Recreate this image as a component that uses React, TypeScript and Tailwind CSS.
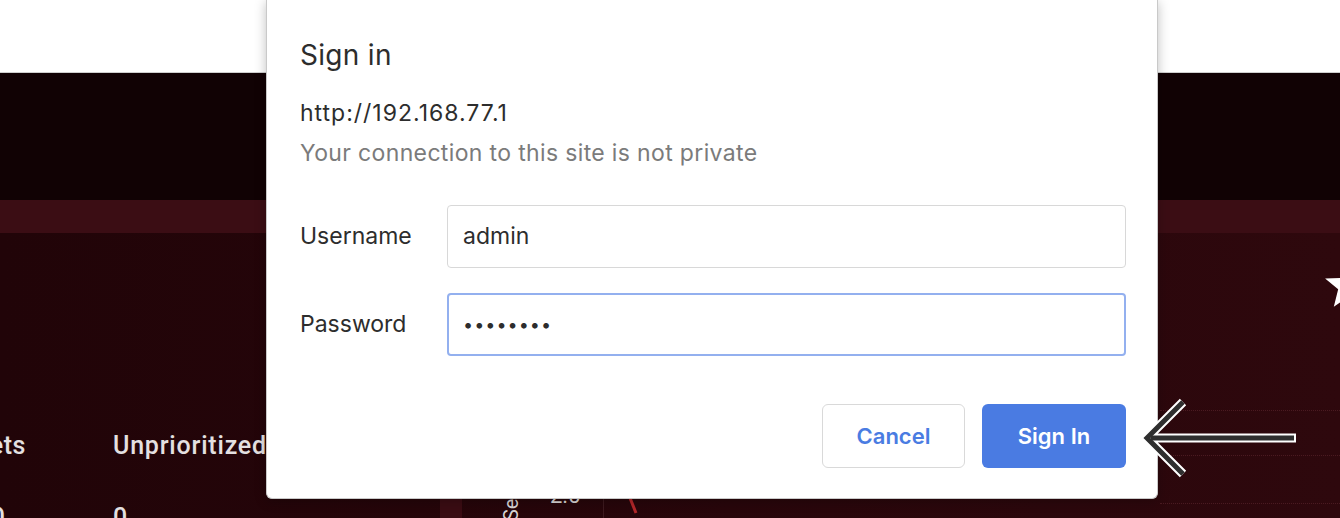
import React from 'react';

const dialogFont = { fontFamily: 'Inter, "Noto Sans", sans-serif' };

function Arrow() {
  const pts = '1183,402 1147,438 1183,474';
  return (
    <svg className="absolute left-0 top-0" width="1340" height="518" viewBox="0 0 1340 518">
      <polyline points={pts} fill="none" stroke="#ffffff" strokeWidth="9" strokeLinejoin="miter" />
      <line x1="1150" y1="438" x2="1296" y2="438" stroke="#ffffff" strokeWidth="9" />
      <polyline points={pts} fill="none" stroke="#2f2f2f" strokeWidth="5" strokeLinejoin="miter" />
      <line x1="1151" y1="438" x2="1294" y2="438" stroke="#2f2f2f" strokeWidth="5" />
    </svg>
  );
}

function Star() {
  return (
    <svg width="48" height="46" viewBox="0 0 44 42" className="shrink-0">
      <polygon
        points="22,0 27.5,14.5 43,15 31,25 35,41 22,32 9,41 13,25 1,15 16.5,14.5"
        fill="#ffffff"
      />
    </svg>
  );
}

function SignInDialog() {
  return (
    <div
      className="absolute left-[266px] top-0 flex h-[499px] w-[892px] flex-col rounded-b-[6px] border border-t-0 border-[#c9c9c9] bg-white pl-[33px] pr-[31px] shadow-[0_2px_12px_rgba(0,0,0,0.25)]"
      style={dialogFont}
    >
      <h1 className="mt-[39px] text-[28px] leading-[32px] tracking-[0.3px] text-[#2d2d2d]">Sign in</h1>
      <p className="mt-[28px] text-[23px] leading-[28px] tracking-[1px] text-[#2d2d2d]">http://192.168.77.1</p>
      <p className="mt-[12px] text-[23px] leading-[28px] tracking-[0.35px] text-[#7b7b7b]">
        Your connection to this site is not private
      </p>

      <div className="mt-[38px] flex flex-col gap-[25px]">
        <div className="flex items-center">
          <span className="w-[147px] text-[23px] text-[#2d2d2d]">Username</span>
          <div className="flex h-[63px] flex-1 items-center rounded-[4px] border border-[#d8d8d8] px-[15px] text-[23px] text-[#2d2d2d]">
            admin
          </div>
        </div>
        <div className="flex items-center">
          <span className="w-[147px] text-[23px] text-[#2d2d2d]">Password</span>
          <div className="flex h-[63px] flex-1 items-center rounded-[4px] border-2 border-[#93b0ef] px-[14px] text-[18px] tracking-[1px] text-[#2d2d2d]">
            ••••••••
          </div>
        </div>
      </div>

      <div className="mt-[48px] flex justify-end gap-[17px]">
        <button className="h-[64px] w-[143px] rounded-[6px] border border-[#d9d9d9] bg-white text-[22px] font-semibold text-[#4a7ce2]">
          Cancel
        </button>
        <button className="h-[64px] w-[144px] rounded-[6px] bg-[#4a7be2] text-[22px] font-semibold text-white">
          Sign In
        </button>
      </div>
    </div>
  );
}

export default function App() {
  return (
    <div
      className="relative h-[518px] w-[1340px] overflow-hidden bg-[#220409]"
      style={{ fontFamily: 'Roboto, "Liberation Sans", sans-serif' }}
    >
      {/* browser chrome strip */}
      <div className="h-[73px] border-b border-[#cfcfcf] bg-white" />
      {/* app header */}
      <div className="h-[127px] bg-[#110204]" />
      <div className="h-[33px] bg-[#3b0d14]" />

      {/* dashboard content */}
      <div className="grid h-[285px] grid-cols-[430px_730px_1fr] bg-gradient-to-r from-[#210408] to-[#2e080d]">
        <div className="flex gap-[28px] pt-[194px] -ml-[54px]">
          <div className="flex w-[139px] flex-col gap-[34px]">
            <span className="text-[25px] font-medium tracking-[0.5px] text-[#e4e0e1]">Assets</span>
            <span className="text-right text-[25px] font-medium text-[#e4e0e1] pr-[80px]">0</span>
          </div>
          <div className="flex flex-col gap-[34px]">
            <span className="text-[25px] font-medium tracking-[0.8px] text-[#e4e0e1]">Unprioritized</span>
            <span className="text-[25px] font-medium text-[#e4e0e1]">0</span>
          </div>
        </div>

        <div className="flex pt-[250px]">
          <div className="ml-[10px] h-[40px] w-[22px] bg-[#3a0c13]" />
          <div className="relative ml-[40px] h-[40px] w-[24px]">
            <span className="absolute left-[-6px] top-[38px] origin-top-left -rotate-90 whitespace-nowrap text-[20px] text-[#d8d4d4]">
              Severity
            </span>
          </div>
          <span className="ml-[24px] mt-[2px] text-[22px] leading-[22px] text-[#d8d4d4]">2.0</span>
          <div className="ml-[22px] h-[40px] border-l border-[#3d1a1f]" />
          <svg width="60" height="40" viewBox="0 0 60 40">
            <line x1="20" y1="0" x2="32" y2="30" stroke="#b3272a" strokeWidth="3" />
          </svg>
        </div>

        <div className="flex flex-col">
          <div className="flex h-[177px] items-start justify-end pt-[29px] -mr-[32px]">
            <Star />
          </div>
          <div className="h-[45px] border-t border-dotted border-[#4a1a21]" />
          <div className="h-[48px] border-t border-dotted border-[#4a1a21]" />
          <div className="flex-1 border-t border-dotted border-[#4a1a21]" />
        </div>
      </div>

      <SignInDialog />
      <Arrow />
    </div>
  );
}
